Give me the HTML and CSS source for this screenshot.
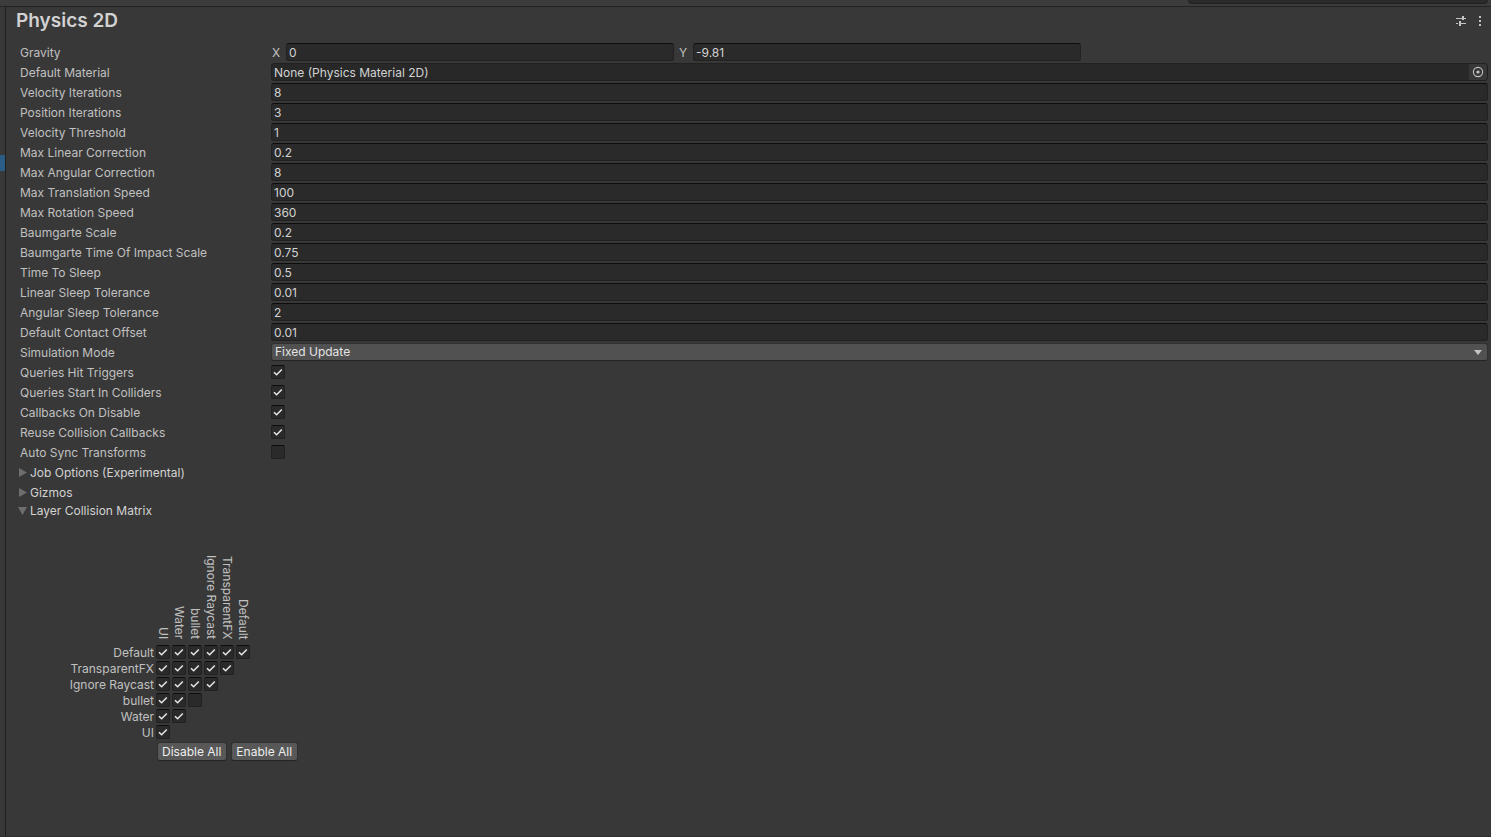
FILE: index.html
```
<!DOCTYPE html>
<html lang="en">
<head>
    <meta charset="UTF-8">
    <meta name="viewport" content="width=device-width, initial-scale=1.0">
    <title>Physics 2D</title>
    <link rel="stylesheet" href="styles.css">
</head>
<body>
    <div class="toolbar">
        <div class="search-edge"></div>
    </div>
    <div class="window">
        <div class="sidebar">
            <div class="selected-item"></div>
        </div>
        <main class="panel">
            <header class="panel-header">
                <h1>Physics 2D</h1>
                <div class="header-actions">
                    <button class="icon-btn" aria-label="Presets">
                        <svg width="12" height="12" viewBox="0 0 12 12" fill="#c4c4c4">
                            <path d="M1 3h6v1H1zM7 1h2v4H7zM9 3h2v1H9zM1 8h2v1H1zM4 6h2v5H4zM6 8h5v1H6z"/>
                        </svg>
                    </button>
                    <button class="icon-btn" aria-label="More options">
                        <svg width="12" height="12" viewBox="0 0 12 12" fill="#c4c4c4">
                            <path d="M5 1h2v2H5zM5 5h2v2H5zM5 9h2v2H5z"/>
                        </svg>
                    </button>
                </div>
            </header>

            <form class="settings">
                <div class="row">
                    <span class="label">Gravity</span>
                    <div class="vector">
                        <div class="axis">
                            <label for="gravity-x">X</label>
                            <input class="field" type="text" id="gravity-x" value="0">
                        </div>
                        <div class="axis">
                            <label for="gravity-y">Y</label>
                            <input class="field" type="text" id="gravity-y" value="-9.81">
                        </div>
                    </div>
                </div>
                <div class="row">
                    <label class="label" for="material">Default Material</label>
                    <div class="object-field">
                        <input type="text" id="material" value="None (Physics Material 2D)" readonly>
                        <button type="button" class="picker" aria-label="Select material">
                            <svg width="12" height="12" viewBox="0 0 12 12">
                                <circle cx="6" cy="6" r="4.6" fill="none" stroke="#c4c4c4" stroke-width="1.1"/>
                                <circle cx="6" cy="6" r="1.6" fill="#c4c4c4"/>
                            </svg>
                        </button>
                    </div>
                </div>
                <div class="row">
                    <label class="label" for="velocity-iterations">Velocity Iterations</label>
                    <input class="field" type="text" id="velocity-iterations" value="8">
                </div>
                <div class="row">
                    <label class="label" for="position-iterations">Position Iterations</label>
                    <input class="field" type="text" id="position-iterations" value="3">
                </div>
                <div class="row">
                    <label class="label" for="velocity-threshold">Velocity Threshold</label>
                    <input class="field" type="text" id="velocity-threshold" value="1">
                </div>
                <div class="row">
                    <label class="label" for="max-linear">Max Linear Correction</label>
                    <input class="field" type="text" id="max-linear" value="0.2">
                </div>
                <div class="row">
                    <label class="label" for="max-angular">Max Angular Correction</label>
                    <input class="field" type="text" id="max-angular" value="8">
                </div>
                <div class="row">
                    <label class="label" for="max-translation">Max Translation Speed</label>
                    <input class="field" type="text" id="max-translation" value="100">
                </div>
                <div class="row">
                    <label class="label" for="max-rotation">Max Rotation Speed</label>
                    <input class="field" type="text" id="max-rotation" value="360">
                </div>
                <div class="row">
                    <label class="label" for="baumgarte">Baumgarte Scale</label>
                    <input class="field" type="text" id="baumgarte" value="0.2">
                </div>
                <div class="row">
                    <label class="label" for="baumgarte-toi">Baumgarte Time Of Impact Scale</label>
                    <input class="field" type="text" id="baumgarte-toi" value="0.75">
                </div>
                <div class="row">
                    <label class="label" for="sleep-time">Time To Sleep</label>
                    <input class="field" type="text" id="sleep-time" value="0.5">
                </div>
                <div class="row">
                    <label class="label" for="linear-sleep">Linear Sleep Tolerance</label>
                    <input class="field" type="text" id="linear-sleep" value="0.01">
                </div>
                <div class="row">
                    <label class="label" for="angular-sleep">Angular Sleep Tolerance</label>
                    <input class="field" type="text" id="angular-sleep" value="2">
                </div>
                <div class="row">
                    <label class="label" for="contact-offset">Default Contact Offset</label>
                    <input class="field" type="text" id="contact-offset" value="0.01">
                </div>
                <div class="row">
                    <label class="label" for="simulation-mode">Simulation Mode</label>
                    <select class="dropdown" id="simulation-mode">
                        <option>Fixed Update</option>
                        <option>Update</option>
                        <option>Script</option>
                    </select>
                </div>
                <div class="row">
                    <label class="label" for="hit-triggers">Queries Hit Triggers</label>
                    <input class="check" type="checkbox" id="hit-triggers" checked>
                </div>
                <div class="row">
                    <label class="label" for="start-in">Queries Start In Colliders</label>
                    <input class="check" type="checkbox" id="start-in" checked>
                </div>
                <div class="row">
                    <label class="label" for="on-disable">Callbacks On Disable</label>
                    <input class="check" type="checkbox" id="on-disable" checked>
                </div>
                <div class="row">
                    <label class="label" for="reuse">Reuse Collision Callbacks</label>
                    <input class="check" type="checkbox" id="reuse" checked>
                </div>
                <div class="row">
                    <label class="label" for="auto-sync">Auto Sync Transforms</label>
                    <input class="check" type="checkbox" id="auto-sync">
                </div>
            </form>

            <div class="foldouts">
                <button class="foldout" aria-expanded="false">
                    <svg width="10" height="10" viewBox="0 0 10 10" fill="#6e6e6e"><path d="M1 0v9l8-4.5z"/></svg>
                    Job Options (Experimental)
                </button>
                <button class="foldout" aria-expanded="false">
                    <svg width="10" height="10" viewBox="0 0 10 10" fill="#6e6e6e"><path d="M1 0v9l8-4.5z"/></svg>
                    Gizmos
                </button>
            </div>
            <button class="foldout" aria-expanded="true">
                <svg width="10" height="10" viewBox="0 0 10 10" fill="#6e6e6e"><path d="M0 1h9L4.5 9z"/></svg>
                Layer Collision Matrix
            </button>

            <section class="matrix">
                <table>
                    <thead>
                        <tr>
                            <td></td>
                            <th scope="col"><span>UI</span></th>
                            <th scope="col"><span>Water</span></th>
                            <th scope="col"><span>bullet</span></th>
                            <th scope="col"><span>Ignore Raycast</span></th>
                            <th scope="col"><span>TransparentFX</span></th>
                            <th scope="col"><span>Default</span></th>
                        </tr>
                    </thead>
                    <tbody>
                        <tr>
                            <th scope="row">Default</th>
                            <td><input class="check" type="checkbox" aria-label="Default / UI" checked></td>
                            <td><input class="check" type="checkbox" aria-label="Default / Water" checked></td>
                            <td><input class="check" type="checkbox" aria-label="Default / bullet" checked></td>
                            <td><input class="check" type="checkbox" aria-label="Default / Ignore Raycast" checked></td>
                            <td><input class="check" type="checkbox" aria-label="Default / TransparentFX" checked></td>
                            <td><input class="check" type="checkbox" aria-label="Default / Default" checked></td>
                        </tr>
                        <tr>
                            <th scope="row">TransparentFX</th>
                            <td><input class="check" type="checkbox" aria-label="TransparentFX / UI" checked></td>
                            <td><input class="check" type="checkbox" aria-label="TransparentFX / Water" checked></td>
                            <td><input class="check" type="checkbox" aria-label="TransparentFX / bullet" checked></td>
                            <td><input class="check" type="checkbox" aria-label="TransparentFX / Ignore Raycast" checked></td>
                            <td><input class="check" type="checkbox" aria-label="TransparentFX / TransparentFX" checked></td>
                        </tr>
                        <tr>
                            <th scope="row">Ignore Raycast</th>
                            <td><input class="check" type="checkbox" aria-label="Ignore Raycast / UI" checked></td>
                            <td><input class="check" type="checkbox" aria-label="Ignore Raycast / Water" checked></td>
                            <td><input class="check" type="checkbox" aria-label="Ignore Raycast / bullet" checked></td>
                            <td><input class="check" type="checkbox" aria-label="Ignore Raycast / Ignore Raycast" checked></td>
                        </tr>
                        <tr>
                            <th scope="row">bullet</th>
                            <td><input class="check" type="checkbox" aria-label="bullet / UI" checked></td>
                            <td><input class="check" type="checkbox" aria-label="bullet / Water" checked></td>
                            <td><input class="check" type="checkbox" aria-label="bullet / bullet"></td>
                        </tr>
                        <tr>
                            <th scope="row">Water</th>
                            <td><input class="check" type="checkbox" aria-label="Water / UI" checked></td>
                            <td><input class="check" type="checkbox" aria-label="Water / Water" checked></td>
                        </tr>
                        <tr>
                            <th scope="row">UI</th>
                            <td><input class="check" type="checkbox" aria-label="UI / UI" checked></td>
                        </tr>
                    </tbody>
                </table>
                <div class="matrix-actions">
                    <button class="btn">Disable All</button>
                    <button class="btn">Enable All</button>
                </div>
            </section>
        </main>
    </div>
</body>
</html>
```
FILE: styles.css
```
* {
    box-sizing: border-box;
}

body {
    display: flex;
    flex-direction: column;
    min-height: 100vh;
    margin: 0;
    background-color: #383838;
    color: #c0c0c0;
    font-family: Inter, "Liberation Sans", sans-serif;
    font-size: 12px;
    line-height: 16px;
}

button, input, select {
    margin: 0;
    padding: 0;
    border: none;
    background: none;
    color: inherit;
    font: inherit;
}

.toolbar {
    display: flex;
    justify-content: flex-end;
    height: 7px;
    padding-right: 3px;
    background-color: #3c3c3c;
    border-bottom: 1px solid #232323;
}

.search-edge {
    width: 300px;
    height: 4px;
    background-color: #2a2a2a;
    border-bottom: 1px solid #212121;
    border-radius: 0 0 4px 4px;
}

.window {
    display: flex;
    flex: 1;
    border-bottom: 1px solid #322e30;
}

.sidebar {
    width: 6px;
    padding-top: 148px;
    border-right: 1px solid #1f1f1f;
}

.selected-item {
    height: 16px;
    background-color: #2c5d87;
}

.panel {
    flex: 1;
    padding: 0 3px 16px 14px;
}

.panel-header {
    display: flex;
    justify-content: space-between;
    height: 36px;
    padding: 2px 2px 0 0;
    margin-left: -4px;
}

h1 {
    margin: 0;
    font-size: 19px;
    line-height: 24px;
    font-weight: 600;
    color: #d2d2d2;
}

.header-actions {
    display: flex;
    gap: 7px;
    height: 24px;
    align-items: center;
}

.icon-btn {
    display: flex;
}

.row {
    display: grid;
    grid-template-columns: 251px 1fr;
    align-items: start;
    height: 20px;
}

.label {
    line-height: 20px;
}

.vector {
    display: grid;
    grid-template-columns: repeat(3, 1fr);
    gap: 4px;
}

.axis {
    display: flex;
}

.axis label {
    width: 15px;
    padding-left: 1px;
    line-height: 20px;
}

.axis .field {
    flex: 1;
}

.field, .object-field {
    width: 100%;
    min-width: 0;
    height: 18px;
    border: 1px solid #212121;
    border-radius: 3px;
    background-color: #2a2a2a;
    color: #d2d2d2;
}

.field {
    padding: 1px 2px 0;
    border-top-color: #0d0d0d;
}

.object-field {
    display: flex;
    background-color: #282828;
    overflow: hidden;
}

.object-field input {
    flex: 1;
    padding: 1px 2px 0;
}

.picker {
    display: flex;
    align-items: center;
    justify-content: center;
    width: 18px;
    background-color: #373737;
}

.dropdown {
    appearance: none;
    height: 18px;
    padding: 0 3px;
    border: 1px solid #303030;
    border-bottom-color: #242424;
    border-radius: 3px;
    background: #515151 url("data:image/svg+xml,%3Csvg xmlns='http://www.w3.org/2000/svg' width='8' height='5'%3E%3Cpath d='M0 0h8L4 5z' fill='%23c4c4c4'/%3E%3C/svg%3E") no-repeat right 5px center;
    color: #e4e4e4;
}

.check {
    appearance: none;
    display: block;
    width: 14px;
    height: 14px;
    margin-top: 2px;
    border: 1px solid #212121;
    border-top-color: #0d0d0d;
    border-radius: 2px;
    background-color: #2a2a2a;
}

.check:checked {
    background-image: url("data:image/svg+xml,%3Csvg xmlns='http://www.w3.org/2000/svg' width='12' height='12'%3E%3Cpath d='M2 6.2L4.6 8.8L9.8 3.4' fill='none' stroke='%23e8e8e8' stroke-width='1.5'/%3E%3C/svg%3E");
}

.foldouts {
    display: grid;
}

.foldout {
    display: flex;
    align-items: center;
    height: 16px;
    margin-left: -2px;
    gap: 2px;
    color: #d2d2d2;
}

.foldouts .foldout {
    height: 20px;
}

.matrix {
    padding-top: 36px;
}

table {
    border-collapse: collapse;
}

th, td {
    height: 16px;
    padding: 0;
    font-weight: 400;
    white-space: nowrap;
}

thead th {
    width: 16px;
    padding: 0 2px 6px 0;
    vertical-align: bottom;
}

thead span {
    display: block;
    line-height: 14px;
    writing-mode: vertical-rl;
}

tbody th {
    width: 136px;
    padding-right: 2px;
    text-align: right;
}

td .check {
    margin: 0 0 2px;
}

.matrix-actions {
    display: flex;
    gap: 4px;
    margin: 1px 0 0 137px;
}

.btn {
    height: 19px;
    padding: 0 5px 0 4px;
    border: 1px solid #303030;
    border-bottom-color: #242424;
    border-radius: 3px;
    background-color: #585858;
    color: #eeeeee;
}
```
